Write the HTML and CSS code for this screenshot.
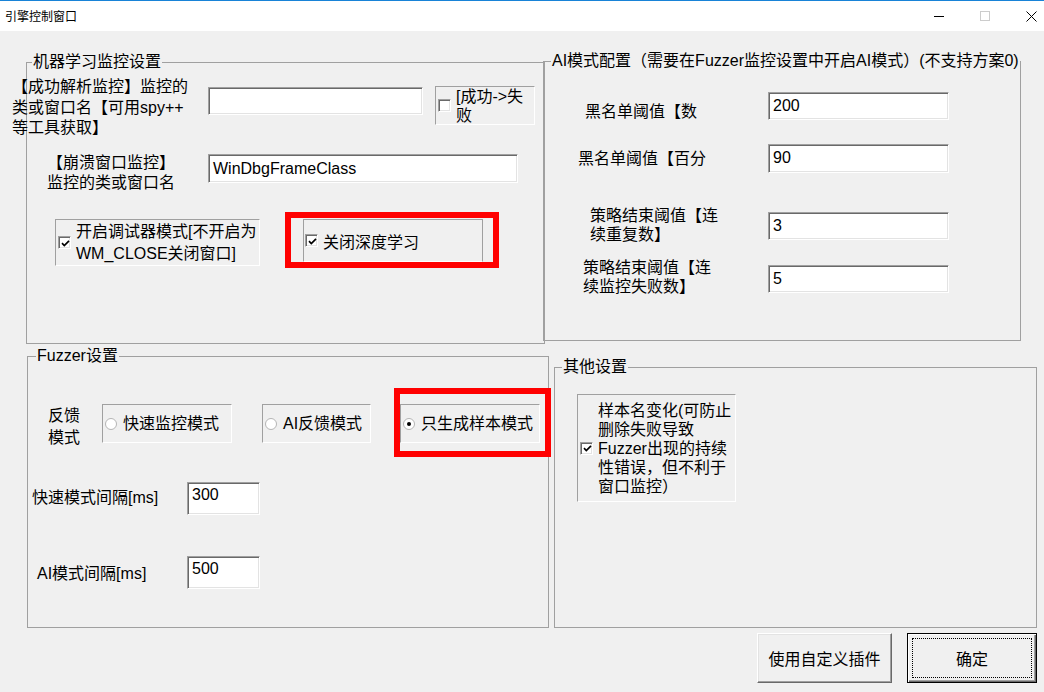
FILE: index.html
```html
<!DOCTYPE html>
<html lang="zh-CN">
<head>
    <meta charset="UTF-8">
    <title>引擎控制窗口</title>
    <link rel="stylesheet" href="styles.css">
</head>
<body>
<div class="window">
    <div class="titlebar">
        <span class="title">引擎控制窗口</span>
        <div class="caption">
            <span class="cap-btn"><svg width="10" height="10" viewBox="0 0 10 10"><path d="M0 5.5h10" stroke="#000" stroke-width="1"/></svg></span>
            <span class="cap-btn"><svg width="10" height="10" viewBox="0 0 10 10"><rect x="0.5" y="0.5" width="9" height="9" fill="none" stroke="#cccccc"/></svg></span>
            <span class="cap-btn"><svg width="11" height="11" viewBox="0 0 11 11"><path d="M0.5 0.5L10.5 10.5M10.5 0.5L0.5 10.5" stroke="#000" stroke-width="1"/></svg></span>
        </div>
    </div>

    <div class="client">
        <div class="row row-top">
            <fieldset class="group group-ml">
                <legend>机器学习监控设置</legend>
                <div class="line line-parse">
                    <div class="lbl lbl-parse">【成功解析监控】监控的<br>类或窗口名【可用spy++<br>等工具获取】</div>
                    <div class="edit edit-parse"></div>
                    <div class="opt check-flip">
                        <span class="cb"></span>
                        <span class="opt-text">[成功-&gt;失<br>败</span>
                    </div>
                </div>
                <div class="line line-crash">
                    <div class="lbl lbl-crash">【崩溃窗口监控】<br>监控的类或窗口名</div>
                    <div class="edit edit-crash">WinDbgFrameClass</div>
                </div>
                <div class="line line-opts">
                    <div class="opt check-debug">
                        <span class="cb checked"><svg width="9" height="9" viewBox="0 0 9 9"><path d="M1 4.2l2.3 2.3L8 1.8" fill="none" stroke="#000" stroke-width="1.7"/></svg></span>
                        <span class="opt-text">开启调试器模式[不开启为<br>WM_CLOSE关闭窗口]</span>
                    </div>
                    <div class="opt check-deep">
                        <span class="cb checked"><svg width="9" height="9" viewBox="0 0 9 9"><path d="M1 4.2l2.3 2.3L8 1.8" fill="none" stroke="#000" stroke-width="1.7"/></svg></span>
                        <span class="opt-text">关闭深度学习</span>
                        <span class="mark mark-deep"></span>
                    </div>
                </div>
            </fieldset>

            <fieldset class="group group-ai">
                <legend>AI模式配置（需要在Fuzzer监控设置中开启AI模式）(不支持方案0)</legend>
                <div class="ai-form">
                    <div class="ai-row ai-row1">
                        <div class="ai-lbl">黑名单阈值【数</div>
                        <div class="edit ai-edit">200</div>
                    </div>
                    <div class="ai-row ai-row2">
                        <div class="ai-lbl">黑名单阈值【百分</div>
                        <div class="edit ai-edit">90</div>
                    </div>
                    <div class="ai-row ai-row3">
                        <div class="ai-lbl">策略结束阈值【连<br>续重复数】</div>
                        <div class="edit ai-edit">3</div>
                    </div>
                    <div class="ai-row ai-row4">
                        <div class="ai-lbl">策略结束阈值【连<br>续监控失败数】</div>
                        <div class="edit ai-edit">5</div>
                    </div>
                </div>
            </fieldset>
        </div>

        <div class="row row-bottom">
            <fieldset class="group group-fuzz">
                <legend>Fuzzer设置</legend>
                <div class="line line-mode">
                    <div class="lbl lbl-mode">反馈<br>模式</div>
                    <div class="opt radio-fast">
                        <span class="rb"><svg width="12" height="12" viewBox="0 0 12 12"><circle cx="6" cy="6" r="5.5" fill="#fff" stroke="#b4b4b4"/></svg></span>
                        <span class="opt-text">快速监控模式</span>
                    </div>
                    <div class="opt radio-ai">
                        <span class="rb"><svg width="12" height="12" viewBox="0 0 12 12"><circle cx="6" cy="6" r="5.5" fill="#fff" stroke="#b4b4b4"/></svg></span>
                        <span class="opt-text">AI反馈模式</span>
                    </div>
                    <div class="opt radio-sample">
                        <span class="rb"><svg width="12" height="12" viewBox="0 0 12 12"><circle cx="6" cy="6" r="5.5" fill="#fff" stroke="#b4b4b4"/><circle cx="6" cy="6" r="2" fill="#000"/></svg></span>
                        <span class="opt-text">只生成样本模式</span>
                        <span class="mark mark-sample"></span>
                    </div>
                </div>
                <div class="line line-fast">
                    <div class="lbl lbl-fast">快速模式间隔[ms]</div>
                    <div class="edit edit-ms">300</div>
                </div>
                <div class="line line-aims">
                    <div class="lbl lbl-aims">AI模式间隔[ms]</div>
                    <div class="edit edit-ms">500</div>
                </div>
            </fieldset>

            <fieldset class="group group-other">
                <legend>其他设置</legend>
                <div class="opt check-names">
                    <span class="cb checked"><svg width="9" height="9" viewBox="0 0 9 9"><path d="M1 4.2l2.3 2.3L8 1.8" fill="none" stroke="#000" stroke-width="1.7"/></svg></span>
                    <span class="opt-text names-text">样本名变化(可防止<br>删除失败导致<br>Fuzzer出现的持续<br>性错误，但不利于<br>窗口监控）</span>
                </div>
            </fieldset>
        </div>

        <div class="actions">
            <button class="btn btn-plugin">使用自定义插件</button>
            <button class="btn btn-default">确定</button>
        </div>
    </div>
</div>
</body>
</html>
```

FILE: styles.css
```css
body {
    margin: 0;
    width: 1044px;
    height: 692px;
    overflow: hidden;
    background: #f0f0f0;
    color: #000;
    font-family: "Liberation Sans", "Noto Sans CJK SC", sans-serif;
    font-size: 16px;
    line-height: 20px;
}

/* title bar */

.titlebar {
    height: 30px;
    border-top: 1px solid #1883d7;
    background: #fff;
    display: flex;
    align-items: center;
    overflow: hidden;
}

.title {
    padding-left: 5px;
    font-family: "Noto Sans CJK SC", sans-serif;
    font-size: 12px;
    line-height: 16px;
}

.caption {
    margin-left: auto;
    margin-right: -10px;
    display: flex;
}

.cap-btn {
    width: 46px;
    height: 30px;
    display: flex;
    align-items: center;
    justify-content: center;
}

/* group boxes */

.row {
    display: flex;
}

.row-top {
    align-items: flex-start;
    padding-left: 26px;
}

.row-bottom {
    align-items: flex-end;
    margin-top: 2px;
    padding-left: 27px;
}

.group {
    margin: 0;
    padding: 0;
    min-width: 0;
    box-sizing: border-box;
    border: 1px solid #a0a0a0;
}

.group legend {
    padding: 0 1px;
    margin-left: 7px;
    line-height: 20px;
    white-space: nowrap;
}

.group-ml {
    width: 519px;
    height: 292px;
    margin-top: 21px;
}

.group-ml legend {
    margin-left: 5px;
}

.group-ai {
    width: 478px;
    height: 290px;
    margin-top: 20px;
    margin-left: -2px;
}

.group-fuzz {
    width: 522px;
    height: 282px;
}

.group-fuzz legend {
    margin-left: 8px;
}

.group-other {
    width: 483px;
    height: 271px;
    margin-left: 5px;
}

/* common controls */

.line {
    display: flex;
    align-items: flex-start;
}

.lbl {
    white-space: nowrap;
    flex-shrink: 0;
}

.lbl-parse {
    line-height: 20.5px;
}

.edit {
    box-sizing: border-box;
    flex-shrink: 0;
    background: #fff;
    border: 1px solid;
    border-color: #a0a0a0 #fff #fff #a0a0a0;
    box-shadow: inset 1px 1px #696969, inset -1px -1px #e3e3e3;
    padding: 3px 4px;
    white-space: nowrap;
}

.opt {
    position: relative;
    box-sizing: border-box;
    flex-shrink: 0;
    display: flex;
    align-items: center;
    gap: 5px;
    padding-left: 2px;
    border: 1px solid;
    border-color: #a0a0a0 #fff #fff #a0a0a0;
}

.opt-text {
    white-space: nowrap;
    line-height: 19px;
}

.cb {
    width: 13px;
    height: 13px;
    box-sizing: border-box;
    flex-shrink: 0;
    background: #fff;
    border: 1px solid;
    border-color: #a0a0a0 #fff #fff #a0a0a0;
    box-shadow: inset 1px 1px #696969, inset -1px -1px #e3e3e3;
    display: flex;
    align-items: center;
    justify-content: center;
}

.cb svg {
    margin: 1px 0 0 1px;
}

.rb {
    width: 12px;
    height: 12px;
    flex-shrink: 0;
    display: flex;
}

.mark {
    position: absolute;
    box-sizing: border-box;
    border: 6px solid #ff0000;
    pointer-events: none;
}

/* machine learning group */

.line-parse {
    height: 78px;
}

.lbl-parse {
    width: 196px;
    margin: 5px 0 0 -15px;
}

.edit-parse {
    width: 215px;
    height: 28px;
    margin-top: 15px;
}

.check-flip {
    width: 100px;
    height: 39px;
    margin: 14px 0 0 12px;
}

.line-crash {
    height: 60px;
}

.lbl-crash {
    width: 161px;
    margin: 3px 0 0 20px;
}

.edit-crash {
    width: 310px;
    height: 29px;
    margin-top: 4px;
    padding-top: 4px;
}

.check-debug {
    width: 205px;
    height: 47px;
    margin: 9px 0 0 28px;
}

.check-debug .opt-text {
    line-height: 22px;
}

.check-deep {
    width: 180px;
    height: 43px;
    margin: 9px 0 0 43px;
    padding-left: 1px;
    border-right-color: #a0a0a0;
}

.check-deep .opt-text {
    padding-top: 4px;
}

.mark-deep {
    left: -19px;
    top: -8px;
    width: 214px;
    height: 56px;
}

/* AI group */

.ai-form {
    padding-top: 21px;
}

.ai-row {
    display: flex;
    align-items: flex-start;
}

.ai-lbl {
    width: 224px;
    box-sizing: border-box;
    flex-shrink: 0;
    white-space: nowrap;
    line-height: 19px;
}

.ai-edit {
    width: 181px;
    height: 28px;
}

.ai-row1 .ai-lbl {
    padding-left: 41px;
    margin-top: 10px;
}

.ai-row2 {
    margin-top: 23px;
}

.ai-row2 .ai-lbl {
    padding-left: 34px;
    margin-top: 5px;
}

.ai-row2 .ai-edit {
    height: 29px;
}

.ai-row3 {
    margin-top: 33px;
}

.ai-row3 .ai-lbl {
    padding-left: 46px;
}

.ai-row3 .ai-edit {
    margin-top: 6px;
}

.ai-row4 {
    margin-top: 14px;
}

.ai-row4 .ai-lbl {
    padding-left: 39px;
}

.ai-row4 .ai-edit {
    margin-top: 7px;
}

/* fuzzer group */

.line-mode {
    margin-top: 38px;
}

.lbl-mode {
    width: 54px;
    margin: 1px 0 0 20px;
    line-height: 22px;
}

.radio-fast,
.radio-ai,
.radio-sample {
    height: 39px;
    gap: 6px;
}

.radio-fast {
    width: 130px;
}

.radio-ai {
    width: 109px;
    margin-left: 30px;
}

.radio-sample {
    width: 140px;
    margin-left: 29px;
}

.mark-sample {
    left: -7px;
    top: -17px;
    width: 157px;
    height: 69px;
}

.line-fast {
    margin-top: 33px;
}

.lbl-fast {
    width: 155px;
    margin: 6px 0 0 4px;
}

.line-aims {
    margin-top: 41px;
}

.lbl-aims {
    width: 150px;
    margin: 8px 0 0 9px;
}

.edit-ms {
    width: 73px;
    height: 33px;
    padding-top: 2px;
}

/* other group */

.check-names {
    width: 159px;
    height: 108px;
    margin: 17px 0 0 22px;
}

/* buttons */

.actions {
    display: flex;
    justify-content: flex-end;
    gap: 15px;
    margin-top: 5px;
    padding-right: 7px;
}

.btn {
    position: relative;
    height: 50px;
    padding: 0;
    background: #f0f0f0;
    color: #000;
    font-family: inherit;
    font-size: 16px;
    border: 1px solid;
    border-color: #fff #696969 #696969 #fff;
    box-shadow: inset -1px -1px #a0a0a0, inset 1px 1px #e3e3e3;
}

.btn-plugin {
    width: 135px;
}

.btn-default {
    width: 130px;
    border-color: #000;
    box-shadow: inset 1px 1px #fff, inset -1px -1px #696969, inset -2px -2px #a0a0a0;
}

.btn-default::after {
    content: "";
    position: absolute;
    left: 4px;
    top: 4px;
    right: 4px;
    bottom: 4px;
    border: 1px dotted #000;
}
```
